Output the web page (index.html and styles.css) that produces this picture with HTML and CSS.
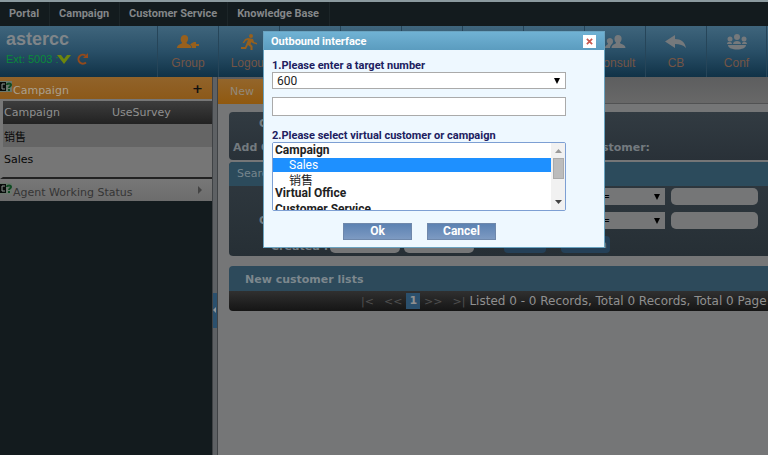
FILE: index.html
```html
<!DOCTYPE html>
<html lang="en">
<head>
<meta charset="utf-8">
<title>astercc</title>
<link rel="stylesheet" href="styles.css">
</head>
<body>
<nav class="menu">
  <a href="#">Portal</a><a href="#">Campaign</a><a href="#">Customer Service</a><a href="#">Knowledge Base</a>
</nav>
<header class="header">
  <div class="brand">
    <h1>astercc</h1>
    <div class="ext"><span>Ext: 5003 :</span>
      <svg class="chevron" width="14" height="9" viewBox="0 0 14 9"><path d="M0 0h4l3 4 3-4h4L7 9z" fill="#6d860d"/></svg>
      <svg width="12" height="12" viewBox="0 0 12 12"><path d="M9 9.500A4.500 4.500 0 1 1 8.500 2.500" fill="none" stroke="#934a1c" stroke-width="2"/><path d="M11 0v5H6z" fill="#934a1c"/></svg>
    </div>
  </div>
  <button class="tool amber" type="button">
    <svg width="22" height="16" viewBox="0 0 22 16"><path d="M7.500 1c5 0 4 6 2 7.500 0 2 5 1.500 5 5.500H0c0-4 5-3.500 5-5.500C3 7 3 1 7.500 1z"/><path d="M17 8h2v2h3v2h-3v2h-4c0-2-1-3-2-3.500L15 9z"/></svg>
    <span>Group</span></button>
  <button class="tool amber" type="button">
    <svg width="20" height="16" viewBox="0 0 20 16"><circle cx="12" cy="2" r="2"/><path d="M9 4l5 1 1 3 3 1v1.500L13.500 9l-1-1-1 2 2 2v4h-2v-3L9 11l-2 4H2v-2h4l3-7-2 .500L5 9H3.500L6 5z"/></svg>
    <span>Logout</span></button>
  <div class="tool"></div><div class="tool"></div><div class="tool"></div><div class="tool"></div><div class="tool"></div>
  <button class="tool" type="button">
    <svg width="22" height="16" viewBox="0 0 22 16"><path d="M14 1c5 0 4 6 2 7.500 0 2 5.500 1.500 5.500 5.500h-14c0-4 4.500-3.500 4.500-5.500C10 7 9.500 1 14 1z"/><path d="M6 4c3 0 4 4 2 6-1 1-2 2-2 4H1c0-3 3-3 3-4.500C2 8 2.500 4 6 4z"/></svg>
    <span>Consult</span></button>
  <button class="tool" type="button">
    <svg width="22" height="16" viewBox="0 0 22 16"><path d="M10 1v4c6 0 10 3 11 9-3-3-6-4-11-4v4L0 7.500z"/></svg>
    <span>CB</span></button>
  <button class="tool" type="button">
    <svg width="22" height="16" viewBox="0 0 22 16"><circle cx="11" cy="3" r="3"/><circle cx="4" cy="5" r="2.500"/><circle cx="18" cy="5" r="2.500"/><path d="M7 10c0-4 8-4 8 0zM1 10c0-3 5-3 5 0zM16 10c0-3 5-3 5 0zM2 11h18c0 6-18 6-18 0z"/></svg>
    <span>Conf</span></button>
</header>
<div class="workspace">
  <aside class="side">
    <h2 class="side-head active">
      <svg width="13" height="12" viewBox="0 0 13 12"><path d="M0 0h12v11H0z" fill="#69776c"/><path d="M0 1h6v9H0z" fill="#080c0b"/><path d="M5 3H2v5h3" fill="none" stroke="#8a918d" stroke-width="1"/><path d="M7 4c0-2 4-2 4 0 0 1-2 1.500-2 3M9 8v2" fill="none" stroke="#104a23" stroke-width="2"/></svg>
      <span>Campaign</span><b>+</b></h2>
    <table class="campaigns">
      <thead><tr><th>Campaign</th><th>UseSurvey</th></tr></thead>
      <tbody><tr class="odd"><td>销售</td><td></td></tr><tr><td>Sales</td><td></td></tr></tbody>
    </table>
    <h2 class="side-head">
      <svg width="13" height="12" viewBox="0 0 13 12"><path d="M0 0h12v11H0z" fill="#69776c"/><path d="M0 1h6v9H0z" fill="#080c0b"/><path d="M5 3H2v5h3" fill="none" stroke="#8a918d" stroke-width="1"/><path d="M7 4c0-2 4-2 4 0 0 1-2 1.500-2 3M9 8v2" fill="none" stroke="#104a23" stroke-width="2"/></svg>
      <span>Agent Working Status</span><svg width="5" height="8" viewBox="0 0 5 8"><path d="M0 0l4 4-4 4z" fill="#444"/></svg></h2>
  </aside>
  <div class="splitter"><button type="button" aria-label="Collapse"><svg width="3" height="6" viewBox="0 0 3 6"><path d="M3 0v6L0 3z" fill="#8d9498"/></svg></button></div>
  <main class="main">
    <div class="tabs"><a href="#" class="tab">New</a></div>
    <div class="content">
      <section class="add">
        <div class="add-top">Customer</div>
        <div class="add-row"><span>Add Customer</span><span>Customer:</span></div>
      </section>
      <section class="search">
        <h3>Search</h3>
        <div class="fields">
          <div class="row"><span class="name"></span><select aria-label="Condition"><option>=</option></select><input type="text" aria-label="Value"></div>
          <div class="row"><span class="name">Customer</span><select aria-label="Condition"><option>=</option></select><input type="text" aria-label="Value"></div>
          <div class="row dates"><label for="from">Created :</label><input id="from" type="text"><input type="text" aria-label="Created to"><button type="button">Reset</button><button type="button">Search</button></div>
        </div>
      </section>
      <section class="lists">
        <h3>New customer lists</h3>
        <div class="pager"><a href="#">|&lt;</a><a href="#">&lt;&lt;</a><b>1</b><a href="#">&gt;&gt;</a><a href="#">&gt;|</a><span>Listed 0 - 0 Records, Total 0 Records, Total 0 Page</span></div>
      </section>
    </div>
  </main>
</div>
<form class="dialog" role="dialog" aria-labelledby="dialog-title">
  <div class="dialog-head"><span id="dialog-title">Outbound interface</span>
    <button type="button" aria-label="Close"><svg width="7" height="7" viewBox="0 0 8 8"><path d="M1 1l6 6M7 1L1 7" stroke="#c85a50" stroke-width="2"/></svg></button></div>
  <div class="dialog-body">
    <label for="target">1.Please enter a target number</label>
    <div class="pick"><select id="target"><option>600</option></select></div>
    <input type="text" aria-label="Target number">
    <label for="customer">2.Please select virtual customer or campaign</label>
    <div class="listbox">
      <select id="customer" size="5">
        <optgroup label="Campaign"><option selected>Sales</option><option>销售</option></optgroup>
        <optgroup label="Virtual Office"></optgroup>
        <optgroup label="Customer Service"></optgroup>
      </select>
      <div class="scroll"><svg width="7" height="4" viewBox="0 0 7 4"><path d="M0 4h7L3.500 0z" fill="#999"/></svg><i></i><svg width="7" height="4" viewBox="0 0 7 4"><path d="M0 0h7L3.500 4z" fill="#444"/></svg></div>
    </div>
    <div class="actions"><button type="button">Ok</button><button type="button">Cancel</button></div>
  </div>
</form>
</body>
</html>
```
FILE: styles.css
```css
* { box-sizing: border-box; }
body {
  margin: 0;
  min-height: 100vh;
  display: flex;
  flex-direction: column;
  overflow: hidden;
  background: #757677;
  font: 11px "DejaVu Sans", "Noto Sans CJK SC", sans-serif;
}
a { color: inherit; text-decoration: none; }
h1, h2, h3 { margin: 0; font-weight: normal; }
button, input, select { font: inherit; margin: 0; padding: 0; border: 0; border-radius: 0; }
svg { flex: none; }

.menu {
  display: flex;
  height: 26px;
  border-top: 2px solid #8b9a9f;
  background: #131b1e;
  color: #848789;
  font: bold 11px/24px Roboto, Arial, sans-serif;
}
.menu a { padding: 0 10px 0 9px; border-right: 1px solid #1c2528; white-space: nowrap; }

.header {
  display: flex;
  height: 51px;
  overflow: hidden;
  background: linear-gradient(#3f657c, #294f67 50%, #103247);
  color: #7f8589;
  font-family: "Liberation Sans", Arial, sans-serif;
}
.brand { flex: none; width: 157px; padding: 4px 6px; }
.brand h1 { font: bold 18px/18px "Liberation Sans", Arial, sans-serif; }
.ext { display: flex; align-items: center; gap: 6px; height: 18px; color: #0a8a3a; font-size: 11px; margin-top: 2px; }
.ext .chevron { margin-left: -8px; }
.tool {
  flex: none;
  width: 61px;
  padding: 8px 0 0;
  display: flex;
  flex-direction: column;
  align-items: center;
  justify-content: flex-start;
  gap: 6px;
  border-left: 1px solid #264559;
  background: none;
  color: #755545;
  font-size: 12px;
  line-height: 14px;
}
.tool:last-child { border-right: 1px solid #264559; }
.tool svg { fill: #75797c; }
.tool.amber svg { fill: #97601d; }

.workspace { flex: 1; display: flex; min-width: 0; }
.side { flex: none; width: 212px; background: #131b1e; }
.side-head {
  display: flex;
  align-items: center;
  height: 22px;
  padding-right: 9px;
  background: linear-gradient(#777, #6c6c6c);
  color: #353535;
  font-size: 11px;
}
.side-head > svg:first-child { align-self: flex-start; margin-top: 4px; }
.side-head span { flex: 1; padding-top: 4px; }
.side-head.active { background: linear-gradient(#91632a, #8c591a); color: #aaa08f; }
.side-head b { color: #111; font-size: 13px; }
.campaigns {
  width: 100%;
  border-collapse: separate;
  border-spacing: 0;
  border: solid #222;
  border-width: 0 0 2px 3px;
  border-left-color: #777;
  background: #767676;
  color: #080808;
  table-layout: fixed;
}
.campaigns th, .campaigns td { height: 23px; padding: 0 1px; text-align: left; font-weight: normal; }
.campaigns th { color: #909090; background: linear-gradient(#3d3d3d, #222); border-top: 2px solid #777; height: 25px; }
.campaigns tbody tr:last-child td { height: 30px; padding-bottom: 6px; }
.campaigns th:first-child { width: 108px; }
.campaigns .odd { background: #656565; }
.splitter { flex: none; width: 6px; display: flex; align-items: center; background: #5e6164; border: solid #3f4245; border-width: 0 1px; }
.splitter button { width: 4px; height: 35px; margin-top: 88px; display: flex; align-items: center; background: #2b506d; }

.main { flex: 1; min-width: 0; overflow: hidden; }
.tabs { height: 27px; padding-top: 2px; background: linear-gradient(#5d5e5f, #686868); border-bottom: 1px solid #515253; }
.tab { display: block; width: 90px; height: 25px; padding-left: 12px; background: linear-gradient(#93652b, #90590f); color: #938979; line-height: 26px; }
.content { display: flex; flex-direction: column; padding: 8px 0 0 11px; }
.add, .search, .lists { border-radius: 4px 0 0 4px; overflow: hidden; }
.add { height: 48px; background: linear-gradient(#323b42, #293138); color: #737a7f; font-weight: bold; font-size: 11px; line-height: 24px; }
.add-top { padding-left: 30px; }
.add-row { display: grid; grid-template-columns: 353px 1fr; padding: 0 0 0 4px; }
.search { margin-top: 2px; background: linear-gradient(#303940, #262f35); }
.search h3 { height: 24px; padding-left: 8px; background: #2c4b5c; color: #75858d; font-size: 11px; line-height: 24px; }
.fields { display: flex; flex-direction: column; gap: 7px; padding: 2px 0 3px; }
.row { display: flex; height: 17px; align-items: center; }
.name { width: 360px; padding-left: 30px; color: #737a7f; font-weight: bold; }
.row select, .dialog select { appearance: none; }
.row select {
  width: 76px;
  height: 17px;
  padding-left: 12px;
  color: #000;
  background: #757677 url("data:image/svg+xml,%3Csvg xmlns='http://www.w3.org/2000/svg' width='6' height='6'%3E%3Cpath d='M0 0h6L3 6z'/%3E%3C/svg%3E") no-repeat right 5px center;
}
.row input { width: 87px; height: 17px; border-radius: 5px; background: #757677; margin-left: 6px; }
.dates label { width: 97px; padding: 4px 0 0 42px; color: #737a7f; font-size: 11px; font-weight: bold; white-space: nowrap; }
.dates input { width: 70px; margin-left: 4px; }
.dates button { height: 17px; width: 42px; margin-left: 30px; border-radius: 4px; background: #254057; color: #5f7a8d; font: bold 11px/17px "DejaVu Sans", sans-serif; }
.dates button + button { width: 49px; margin-left: 15px; }
.lists { margin-top: 10px; }
.lists h3 { height: 25px; padding-left: 16px; background: #2d4a5b; color: #7c878d; font: bold 11px/27px "DejaVu Sans", sans-serif; }
.pager { display: flex; align-items: center; height: 20px; padding-left: 132px; background: linear-gradient(#303030, #151515); color: #909090; white-space: nowrap; }
.pager a { color: #505050; }
.pager a + a { margin-left: 10px; }
.pager b { margin: 0 4px; padding: 0 3px; background: #2b506d; line-height: 16px; }
.pager span { margin-left: 4px; font-size: 12px; }

.dialog {
  position: absolute;
  left: 50%;
  top: 31px;
  width: 342px;
  margin-left: -121px;
  background: #eef8ff;
  border: 1px solid #6aa3c0;
  font: 12px Roboto, "Noto Sans CJK SC", sans-serif;
}
.dialog-head {
  display: flex;
  align-items: center;
  justify-content: space-between;
  height: 18px;
  padding: 0 8px 0 7px;
  background: linear-gradient(#70b2d4, #5b9cbf);
  color: #fff;
  font-size: 11px;
  font-weight: bold;
}
.dialog-head button { width: 13px; height: 13px; display: grid; place-items: center; background: #fff; }
.dialog-body { display: flex; flex-direction: column; padding: 9px 38px 7px 8px; }
.dialog label { font: bold 11px/13px Roboto, sans-serif; color: #202060; }
.pick select {
  display: block;
  width: 100%;
  height: 17px;
  padding-left: 4px;
  border: 1px solid #aaa;
  color: #222;
  background: #fff url("data:image/svg+xml,%3Csvg xmlns='http://www.w3.org/2000/svg' width='6' height='6'%3E%3Cpath d='M0 0h6L3 6z'/%3E%3C/svg%3E") no-repeat right 5px center;
}
.dialog input { height: 19px; margin: 8px 0 13px; border: 1px solid #aaa; background: #fff; }
.listbox { display: flex; height: 69px; border: 1px solid #7d9fd3; border-radius: 2px; background: #fff; overflow: hidden; }
.listbox select { flex: 1; height: 67px; overflow: hidden; outline: 0; background: #fff; color: #222; font-size: 12px; }
.listbox optgroup { font-weight: bold; line-height: 15px; font-size: 12px; }
.listbox option { display: flex; align-items: center; height: 14px; min-height: 14px; padding: 0 0 0 16px; font-weight: normal; line-height: 14px; color: #222; }
.listbox option::before { content: none; }
.listbox option:checked { color: #fff; background: #1e90ff linear-gradient(#1e90ff, #1e90ff); }
.scroll { width: 14px; padding: 6px 1px; display: flex; flex-direction: column; align-items: center; background: #f1f1f1; }
.scroll i { width: 11px; height: 21px; margin: 5px 0 auto; background: #bcbcbc; border: 1px solid #aaa; }
.actions { display: flex; gap: 15px; margin-top: 12px; padding-left: 71px; }
.actions button { width: 69px; height: 17px; border: 1px solid #6f88ab; background: linear-gradient(#5c82b2, #7d9ac2); color: #fff; font: bold 12px/15px Roboto, sans-serif; }
```
